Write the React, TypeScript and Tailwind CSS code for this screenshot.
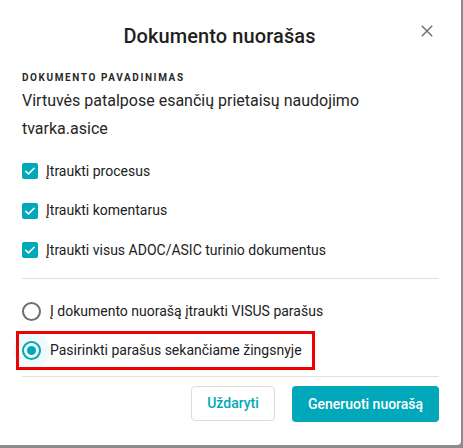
import React from 'react';

const checks = [
  'Įtraukti procesus',
  'Įtraukti komentarus',
  'Įtraukti visus ADOC/ASIC turinio dokumentus',
];

const CheckIcon = () => (
  <span className="flex h-4 w-4 shrink-0 items-center justify-center rounded-[2px] bg-[#00a8ba]">
    <svg viewBox="0 0 16 16" className="h-4 w-4" fill="none">
      <path d="M3.8 8.3l2.7 2.6 5.6-5.6" stroke="white" strokeWidth="1.6" strokeLinecap="round" strokeLinejoin="round" />
    </svg>
  </span>
);

export default function App() {
  return (
    <div className="h-[448px] w-[463px] bg-[#8c8c8c] font-['Roboto',sans-serif] text-[#212121]">
      <div className="flex h-[445px] w-[461px] flex-col rounded-br-[4px] bg-white px-[22px]">
        {/* Header */}
        <div className="relative flex h-[72px] items-center justify-center pr-[22px]">
          <h1 className="text-[20px] font-medium tracking-[0.1px] text-[#1f1f1f]">Dokumento nuorašas</h1>
          <button className="absolute right-[2px] top-[21px] flex h-5 w-5 items-center justify-center text-[#757575]" aria-label="Uždaryti">
            <svg viewBox="0 0 12 12" className="h-3 w-3" fill="none">
              <path d="M0.8 0.8l10.4 10.4M11.2 0.8L0.8 11.2" stroke="currentColor" strokeWidth="1.6" />
            </svg>
          </button>
        </div>

        {/* Document name */}
        <div className="text-[10px] font-bold uppercase leading-[12px] tracking-[1.6px] text-[#2a2a2a]">Dokumento pavadinimas</div>
        <p className="mt-[3px] text-[16px] leading-[28px] text-[#262626]">
          Virtuvės patalpose esančių prietaisų naudojimo tvarka.asice
        </p>

        {/* Options */}
        <div className="mt-[20px] flex flex-col gap-[23.5px]">
          {checks.map((c) => (
            <label key={c} className="flex h-4 items-center gap-[8px] text-[14px]">
              <CheckIcon />
              <span>{c}</span>
            </label>
          ))}
        </div>

        <div className="mt-[20px] h-px bg-[#e0e0e0]" />

        <div className="mt-[22px] flex flex-col">
          <label className="flex h-[20px] items-center gap-[9px] text-[14px]">
            <span className="h-[19px] w-[19px] shrink-0 rounded-full border-2 border-[#6e6e6e]" />
            <span>Į dokumento nuorašą įtraukti VISUS parašus</span>
          </label>
          <div className="-ml-[6px] mt-[10px] flex h-[39px] w-[299px] items-center border-[3px] border-[#f00000] pl-[3px]">
            <label className="flex items-center gap-[9px] whitespace-nowrap text-[14px]">
              <span className="relative flex h-[19px] w-[19px] shrink-0 items-center justify-center">
                <span className="absolute -inset-[9px] rounded-full bg-[#00a8ba]/[0.06]" />
                <span className="relative flex h-[19px] w-[19px] items-center justify-center rounded-full border-2 border-[#00a8ba]">
                  <span className="h-[9px] w-[9px] rounded-full bg-[#00a8ba]" />
                </span>
              </span>
              <span>Pasirinkti parašus sekančiame žingsnyje</span>
            </label>
          </div>
        </div>

        <div className="mt-[6px] h-px bg-[#e0e0e0]" />

        {/* Footer */}
        <div className="mt-[9px] flex justify-end gap-[17px]">
          <button className="h-[35px] w-[84px] rounded-[4px] border border-[#dcdcdc] bg-white text-[14px] font-medium text-[#00a8ba]">
            Uždaryti
          </button>
          <button className="h-[36px] w-[147px] rounded-[4px] bg-[#00a8ba] text-[14px] font-medium text-white">
            Generuoti nuorašą
          </button>
        </div>
      </div>
    </div>
  );
}
